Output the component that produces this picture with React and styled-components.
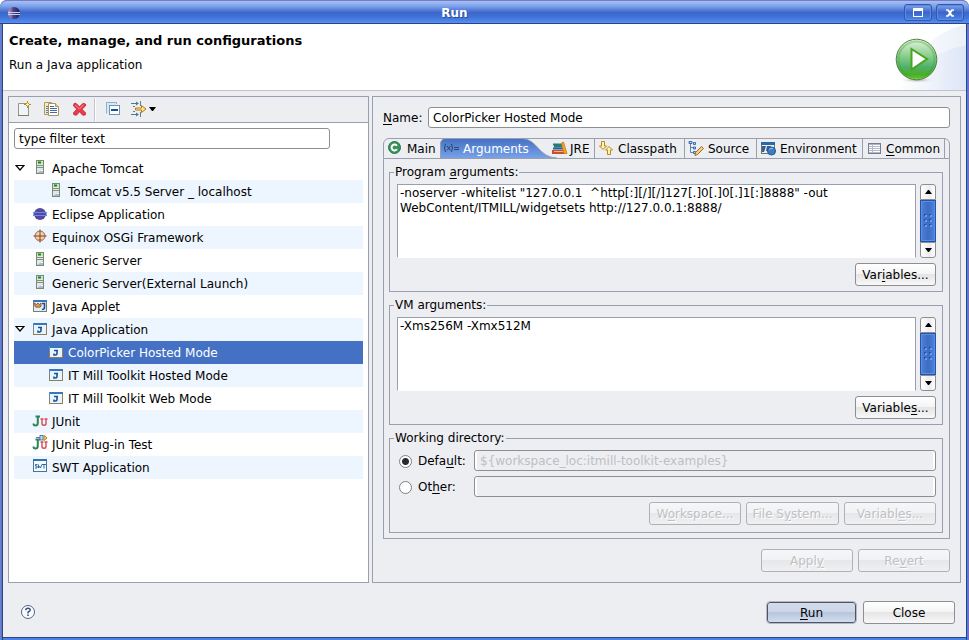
import React, { useState } from "react";
import styled, { createGlobalStyle } from "styled-components";

const line = "#9b9eae";
const face = "#edeef2";
const accent = "#4471c4";

const GlobalStyle = createGlobalStyle`
  *, *::before, *::after { box-sizing: border-box; }
  html, body { margin: 0; }
  body, button, input, textarea {
    font-family: "DejaVu Sans", Verdana, sans-serif;
    font-size: 12px;
    line-height: 15px;
    color: #000;
  }
  body { background: #fff; }
  u { text-underline-offset: 2px; }
`;

/* ---------- window frame ---------- */

const Window = styled.div`
  display: flex;
  flex-direction: column;
  min-height: 100vh;
  padding: 0 3px 3px;
  border-radius: 7px 7px 0 0;
  background: linear-gradient(90deg, #7d7ab8 0 1px, #4a7fe4 1px 2px, #33427f 2px 3px, transparent 3px calc(100% - 3px), #33427f calc(100% - 3px) calc(100% - 2px), #4a7fe4 calc(100% - 2px) calc(100% - 1px), #7470c0 calc(100% - 1px)),
    #4a82e8;
`;

const TitleBar = styled.header`
  display: flex;
  align-items: center;
  height: 24px;
  margin: 0 -3px;
  padding: 1px 5px 0 7px;
  border-top: 1px solid #7b7abc;
  border-bottom: 1px solid #33427f;
  border-radius: 7px 7px 0 0;
  background: linear-gradient(#a5c1f7, #7a9fe8 25%, #3c66cb 52%, #4173d8 75%, #5490f5);
`;

const WindowTitle = styled.h1`
  flex: 1;
  margin: 0 12px 0 0;
  text-align: center;
  font-size: 12px;
  line-height: 20px;
  color: #fff;
  text-shadow: 1px 1px #2c4c96;
`;

const FrameButton = styled.button`
  display: flex;
  align-items: center;
  justify-content: center;
  width: 28px;
  height: 17px;
  margin-left: 4px;
  padding: 0;
  border: 1px solid #3159ab;
  border-radius: 3px;
  box-shadow: inset 0 0 0 1px #5f8ce2;
  background: linear-gradient(#7fa4ec, #3b65c9 50%, #4c84e8);
`;

const Client = styled.div`
  flex: 1;
  display: flex;
  flex-direction: column;
  background: ${face};
  border-bottom: 1px solid #33427f;
  margin-bottom: -1px;
`;

/* ---------- banner ---------- */

const Banner = styled.section`
  position: relative;
  height: 67px;
  padding: 9px 6px;
  background: #fff;
  border-bottom: 1px solid #c2c3c6;
`;

const BannerTitle = styled.h2`
  margin: 0 0 10px;
  font-size: 13px;
  line-height: 15px;
`;

const BannerText = styled.p`
  margin: 0;
`;

const BannerArt = styled.svg`
  position: absolute;
  top: 0;
  right: 0;
`;

/* ---------- panels ---------- */

const Panels = styled.main`
  flex: 1;
  display: grid;
  grid-template-columns: 361fr 589fr;
  gap: 3px;
  padding: 5px 5px 0;
`;

const Panel = styled.section`
  min-width: 0;
  border: 1px solid ${line};
  background: ${(p) => (p.$white ? "#fff" : face)};
`;

const Toolbar = styled.div`
  display: flex;
  align-items: center;
  height: 26px;
  padding: 0 0 1px 1px;
  background: ${face};
  border-bottom: 1px solid ${line};
`;

const ToolButton = styled.button`
  display: flex;
  align-items: center;
  justify-content: center;
  gap: 2px;
  width: ${(p) => (p.$menu ? 33 : 28)}px;
  height: 22px;
  padding: 0;
  border: 0;
  background: none;
`;

const ToolDivider = styled.span`
  width: 2px;
  height: 23px;
  margin-right: 3px;
  background: linear-gradient(90deg, #c3c5ca 50%, #fff 50%);
`;

const Field = styled.input`
  width: 100%;
  min-width: 0;
  height: 21px;
  padding: 1px 4px 0;
  border: 1px solid #8c8e91;
  border-radius: 3px;
  background: #fff;
  &:disabled {
    padding-left: 5px;
    background: ${face};
    color: #bdbfc2;
    box-shadow: inset 2px 0 #fff, inset -2px 0 #fff;
  }
`;

const FilterBar = styled.div`
  width: 90%;
  padding: 5px 2px 0 5px;
`;

/* ---------- tree ---------- */

const Tree = styled.ul`
  margin: 8px 5px 0;
  padding: 0;
  list-style: none;
`;

const TreeRow = styled.li`
  display: flex;
  align-items: center;
  height: 23px;
  padding-left: ${(p) => p.$level * 16}px;
  white-space: pre;
  background: ${(p) => (p.$selected ? accent : p.$odd ? "#edf5ff" : "#fff")};
  color: ${(p) => (p.$selected ? "#fff" : "#000")};
`;

const TreeToggle = styled.span`
  display: flex;
  width: 18px;
  padding: 0 0 1px 1px;
`;

const TreeIcon = styled.span`
  display: flex;
  width: 20px;
  padding-bottom: 3px;
`;

const TreeLabel = styled.span`
  padding-top: 2px;
`;

/* ---------- right side ---------- */

const Details = styled(Panel)`
  padding: 10px;
`;

const NameRow = styled.div`
  display: grid;
  grid-template-columns: 45px 1fr;
  align-items: center;
  margin-bottom: 10px;
`;

const NameLabel = styled.label`
  padding-top: 2px;
`;

const Tabs = styled.div`
  display: flex;
  height: 21px;
  border: 1px solid ${line};
  border-radius: 6px 6px 0 0;
`;

const Tab = styled.button`
  position: relative;
  display: flex;
  align-items: center;
  gap: 2px;
  height: 19px;
  padding: 0 4px 0 3px;
  border: 0;
  border-right: ${(p) => (p.$divided ? `1px solid ${line}` : 0)};
  background: none;
  white-space: nowrap;
  width: ${(p) => p.$width}px;
  z-index: ${(p) => (p.$active ? 1 : 0)};
  color: ${(p) => (p.$active ? "#fff" : "#000")};
  font-size: 12px;
`;

const TabShape = styled.svg`
  position: absolute;
  left: 0;
  top: -1px;
  z-index: -1;
`;

const TabIcon = styled.span`
  display: flex;
  flex: none;
  width: ${(p) => p.$slot || 18}px;
  padding-bottom: 1px;
`;

const TabLabel = styled.span`
  padding-top: 2px;
`;

const TabPage = styled.div`
  display: flex;
  flex-direction: column;
  gap: 6px;
  padding: 6px 6px 5px 5px;
  border: 1px solid ${line};
  border-top: 0;
`;

const Group = styled.fieldset`
  min-width: 0;
  margin: 0;
  padding: 4px 6px ${(p) => p.$bottom || 5}px 4px;
  border: 1px solid ${line};
`;

const Legend = styled.legend`
  height: 15px;
  padding: 0 1px;
`;

const GroupBody = styled.div`
  display: flex;
  flex-direction: column;
  gap: 5px;
  padding-left: 3px;
`;

const EditorRow = styled.div`
  display: flex;
  gap: 4px;
`;

const Editor = styled.textarea`
  flex: 1;
  display: block;
  min-width: 0;
  height: 74px;
  padding: 1px 2px 0;
  border: 1px solid ${line};
  border-bottom-color: #fff;
  background: #fff;
  overflow: hidden;
  resize: none;
`;

const ScrollBar = styled.div`
  display: flex;
  flex-direction: column;
  width: 16px;
  height: 74px;
`;

const ScrollButton = styled.button`
  display: flex;
  align-items: center;
  justify-content: center;
  height: 16px;
  padding: 0;
  border: 1px solid #8c8e91;
  border-radius: ${(p) => (p.$end ? "0 0 3px 3px" : "3px 3px 0 0")};
  background: linear-gradient(90deg, #fff, #ececee 60%, #fff);
`;

const Thumb = styled.div`
  flex: 1;
  display: flex;
  align-items: center;
  justify-content: center;
  border: 1px solid #2a52a0;
  box-shadow: inset 0 0 0 1px #5590f0;
  background: linear-gradient(90deg, #4f80d6, #3c6cc4 50%, #4e82dc);
`;

const ButtonRow = styled.div`
  display: flex;
  justify-content: flex-end;
  gap: 5px;
`;

const Button = styled.button`
  width: ${(p) => p.$width || 92}px;
  height: 23px;
  padding: 1px 0 0;
  border: 1px solid #8c8e91;
  border-radius: 3px;
  background: linear-gradient(#fff, #f4f4f5 48%, #e5e5e6 50%, #f8f8f8);
  &:disabled {
    color: #bfc1c4;
    border-color: #b0b1b4;
    text-shadow: 1px 1px #fff;
    background: linear-gradient(#f6f6f8, #f1f2f4 48%, #e6e7e9 50%, #f0f0f2);
  }
`;

const DefaultButton = styled(Button)`
  border: 1px solid #505564;
  outline: 1px solid #b4b8c2;
  height: 21px;
  background: linear-gradient(#d3dcec, #cbd6e9 48%, #b9c6da 50%, #d0dcf0);
`;

const DirectoryRow = styled.div`
  display: grid;
  grid-template-columns: 77px 1fr;
  align-items: center;
`;

const RadioLabel = styled.label`
  display: flex;
  align-items: center;
  gap: 6px;
  padding: 1px 0 0 2px;
`;

const Radio = styled.input`
  appearance: none;
  width: 13px;
  height: 13px;
  margin: 0;
  border: 1px solid #7e8083;
  border-radius: 50%;
  background: #fff;
  &:checked {
    background: radial-gradient(circle, #2a2a2c 3px, #fff 4px);
  }
`;

const Actions = styled(ButtonRow)`
  padding-top: 10px;
`;

const Footer = styled.footer`
  display: flex;
  align-items: center;
  justify-content: space-between;
  padding: 18px 11px 13px 17px;
`;

const FooterButtons = styled(ButtonRow)`
  align-items: center;
  gap: 7px;
`;

const HelpButton = styled.button`
  display: flex;
  padding: 0 0 1px;
  border: 0;
  background: none;
`;

/* ---------- icons ---------- */

const Svg = ({ w = 16, h = 16, children }) => (
  <svg width={w} height={h} viewBox={`0 0 ${w} ${h}`} aria-hidden="true">
    {children}
  </svg>
);

const Globe = () => (
  <Svg w={14} h={14}>
    <defs>
      <linearGradient id="globe">
        <stop offset="0" stopColor="#d9a0b8" />
        <stop offset=".45" stopColor="#4a4288" />
        <stop offset="1" stopColor="#221c58" />
      </linearGradient>
    </defs>
    <circle cx="7" cy="7" r="6" fill="url(#globe)" />
    <path d="M1 6.500h12M1 8.500h12" stroke="#c5cff5" />
  </Svg>
);

const NewIcon = () => (
  <Svg>
    <path d="M2.500 2.500h9l1 1v11h-10z" fill="#eef6fd" stroke="#9a957c" />
    <path d="M2 14.500h11" stroke="#8a7a4a" />
    <path d="M11.500 0v7M8 3.500h7" stroke="#b08a18" />
    <path d="M11.500 1.500l2 2-2 2-2-2z" fill="#fff3a0" stroke="#b08a18" />
  </Svg>
);

const CopyIcon = () => (
  <Svg>
    <path d="M.5 1.500h7l2 2v10h-9z" fill="#f4ecc8" stroke="#b59a56" />
    <path d="M2 5.500h3M2 7.500h3M2 9.500h3M2 11.500h3" stroke="#5a78a8" />
    <path d="M4.500 2.500h7l3 3v9h-10z" fill="#fff" stroke="#a8945c" />
    <path d="M11.500 2.500v3h3" fill="#f0d890" stroke="#a8945c" />
    <path d="M6 5.500h4M6 7.500h7M6 9.500h7M6 11.500h7" stroke="#4568a8" />
  </Svg>
);

const DeleteIcon = () => (
  <Svg>
    <path d="M2 2.500l2-.2 3.500 3.500 3.500-3.500 2.500.7.200 1.700-3.700 3.500 3.700 3.800-.5 2-2.500.2-3.200-3.500-3 3.500-2.500-.4-.7-1.800 3.500-3.800L1.500 5z" fill="#e63c4b" stroke="#c81e34" strokeWidth=".8" />
    <path d="M3 4l4.500 4 4-4.500" stroke="#f58a90" fill="none" />
  </Svg>
);

const CollapseIcon = () => (
  <Svg>
    <path d="M1.500 12.500v-11h10V3" fill="none" stroke="#8db0cc" />
    <rect x="2" y="2" width="9" height="10" fill="#d7e9f6" />
    <rect x="4.500" y="4.500" width="10" height="9" fill="#fff" stroke="#6f93b4" />
    <path d="M6 9h7" stroke="#12559a" strokeWidth="2" />
  </Svg>
);

const FilterIcon = () => (
  <Svg>
    <path d="M0 2.500h7M0 13.500h7" stroke="#4f7899" />
    <path d="M5 .5l3 2-3 2zM5 11.500l3 2-3 2z" fill="#4f7899" />
    <path d="M9.500 0v5M9.500 11v5M2 5.500h2M2 10.500h2" stroke="#627f96" />
    <path d="M4.500 7h6V4.500L15 8l-4.500 3.500V9h-6z" fill="#ffe592" stroke="#b87a10" />
  </Svg>
);

const Caret = ({ up }) => (
  <Svg w={7} h={4}>
    <path d={up ? "M0 4h7L4 0H3z" : "M0 0h7L4 4H3z"} fill="#000" />
  </Svg>
);

const Expander = () => (
  <Svg w={10} h={6}>
    <path d="M1 .5h8L5 5z" fill="#fff" stroke="#000" strokeWidth="1.200" />
  </Svg>
);

const ServerIcon = () => (
  <Svg>
    <rect x="4.500" y="1.500" width="7" height="13" fill="#dfe9f6" stroke="#7f8a68" />
    <rect x="5" y="2" width="6" height="3" fill="#c8e2c4" />
    <path d="M6 3.500h3" stroke="#138a1c" strokeWidth="2" />
    <path d="M4 6.500h8M5 8.500h6" stroke="#84906f" />
    <path d="M5 14l6-4v4z" fill="#a9b9d8" />
    <path d="M9 11.500h2" stroke="#fff" />
  </Svg>
);

const EclipseIcon = () => (
  <Svg>
    <circle cx="8" cy="9" r="6" fill="#56499a" />
    <path d="M1 7.500h14M1 10.500h14" stroke="#6a86f0" />
    <path d="M1 9h14" stroke="#4450b0" />
  </Svg>
);

const EquinoxIcon = () => (
  <Svg>
    <circle cx="8" cy="8" r="5" fill="#f2cfae" stroke="#a3683f" />
    <path d="M4 11a5 5 0 0 0 8 0z" fill="#d39868" />
    <path d="M8 1.500v13M1.500 8h13" stroke="#7c4526" />
  </Svg>
);

const JavaAppIcon = () => (
  <Svg>
    <rect x="1.500" y="3.500" width="13" height="11" fill="#eaf4fd" stroke="#8d815a" />
    <path d="M1 4h14" stroke="#3b75b8" strokeWidth="2" />
    <path d="M1.500 3v6" stroke="#5b8cc4" />
    <path d="M6 7.500h4M9 7v3.500q0 1.500-1.500 1.500H6v-1.500" fill="none" stroke="#17539a" strokeWidth="1.600" />
  </Svg>
);

const AppletIcon = () => (
  <Svg>
    <rect x="1.500" y="3.500" width="13" height="11" fill="#dfeefb" stroke="#7d7b69" />
    <path d="M1 4h14" stroke="#3b75b8" strokeWidth="2" />
    <path d="M2.500 6l2 1.500L6 6l1.500 1.500L9 6v3.500l-2 1-1-.8-1 .8-2-1z" fill="#d99756" stroke="#87481c" strokeWidth=".8" />
    <path d="M10 6.500h2.500v4q0 2-2.500 2" fill="none" stroke="#17539a" strokeWidth="1.600" />
  </Svg>
);

const JUnitIcon = ({ plugin }) => (
  <Svg>
    <path d="M3.500 4.500h4.500M5.800 5v6q0 2.500-2.500 2.500Q1.500 13.500 1.500 11.500" fill="none" stroke="#2b855a" strokeWidth="2" />
    <path d="M8.500 7h3M12.500 7h3M10 7.500v4q0 1.800 2 1.800t2-1.800v-4" fill="none" stroke="#d84a55" strokeWidth="1.400" />
    {plugin && (
      <>
        <path d="M4 2.500h4M6 4.500h2" stroke="#5a80a8" />
        <rect x="8" y=".5" width="3" height="4.500" fill="#bfe0f6" stroke="#33699c" strokeWidth=".8" />
        <path d="M12 .5l3 2.500-3 2.500z" fill="#ffe27a" stroke="#b57a10" />
      </>
    )}
  </Svg>
);

const SwtIcon = () => (
  <Svg>
    <rect x="1.500" y="1.500" width="13" height="12" fill="#f3faff" stroke="#46759c" />
    <path d="M1 2h14" stroke="#3472b4" strokeWidth="2" />
    <path d="M5.500 6.500h-2v1.500h1.500v2h-2M6.500 6.500v3.500l1-1.500 1 1.500 1.300-3.500M10 6.500h4M12 6.500v4" fill="none" stroke="#23588c" strokeWidth=".9" />
  </Svg>
);

const MainIcon = () => (
  <Svg>
    <circle cx="7.500" cy="7.500" r="6" fill="#39935a" stroke="#27774a" />
    <path d="M10 5.700A3 3 0 1 0 10 9.300" fill="none" stroke="#fff" strokeWidth="1.900" />
  </Svg>
);

const ArgsIcon = () => (
  <Svg>
    <path d="M2.500 4Q.5 8 2.500 12M8.500 4q2 4 0 8M4 6l3.500 4.500M7.500 6L4 10.500M11 7.500h5M11 9.500h5" fill="none" stroke="#27466c" />
  </Svg>
);

const JreIcon = () => (
  <Svg>
    <path d="M1 4.500h9M2 6.500h8" stroke="#207f78" strokeWidth="2" />
    <path d="M1 8.500h10" stroke="#31589a" strokeWidth="2" />
    <path d="M0 12h12" stroke="#c4502c" strokeWidth="4" />
    <path d="M2 11.500h9" stroke="#f1b392" />
    <path d="M9.500 3l2-1L15 13.500h-3z" fill="#f5a623" stroke="#cf7610" strokeWidth=".8" />
  </Svg>
);

const ClasspathIcon = () => (
  <Svg>
    <path d="M3.500 1.500h3V6h2L5 9.500 1.500 6h2z" fill="#fff2b5" stroke="#bd8617" />
    <path d="M9.500 14.500h3V10h2L11 6.500 7.500 10h2z" fill="#fff2b5" stroke="#bd8617" />
  </Svg>
);

const SourceIcon = () => (
  <Svg>
    <path d="M2.500 3v9.500H6M2.500 7.500H6" fill="none" stroke="#5c84ba" />
    <path d="M1 1.500h3v2H1zM5.500 2.500h2v2h-2zM5.500 7h2v2h-2zM5.500 11.500h2v2h-2z" fill="#b8d4f0" stroke="#396daf" />
    <path d="M13.500 6.500l2 2-6 6-2.500 1 .5-3z" fill="#f3cd84" stroke="#a06c20" />
  </Svg>
);

const EnvironmentIcon = () => (
  <Svg>
    <rect x="1.500" y="2.500" width="13" height="11" fill="#e5f0fb" stroke="#76765f" />
    <path d="M1 3.500h14" stroke="#2d65a8" strokeWidth="3" />
    <path d="M2 6h4L4 12H2zM7 6h4l-2 5H6z" fill="#365c92" />
    <circle cx="11.500" cy="11" r="4" fill="#3e7dc0" stroke="#235791" />
    <path d="M9 9.500q2-2 4-1" stroke="#9bc6ee" fill="none" />
  </Svg>
);

const CommonIcon = () => (
  <Svg>
    <rect x="2.500" y="3.500" width="12" height="10" fill="#fff" stroke="#777d8e" />
    <path d="M3 4.500h11" stroke="#a9b5cb" />
    <path d="M3 6.500h11M3 8.500h11M3 10.500h11M3 12.500h11M6.500 4v9" stroke="#b3b9c8" />
  </Svg>
);

const HelpIcon = () => (
  <Svg>
    <circle cx="8" cy="8" r="6.500" fill="#fbfcfe" stroke="#4e6588" />
    <path d="M5.800 6.300q0-2 2.200-2t2.200 1.800Q10.200 7.300 8 8.300v1.200" fill="none" stroke="#38507a" strokeWidth="1.500" />
    <path d="M7.200 10.500h1.600v1.600H7.200z" fill="#38507a" />
  </Svg>
);

const RunBadge = () => (
  <BannerArt width="76" height="66" viewBox="0 0 76 66" aria-hidden="true">
    <defs>
      <linearGradient id="sweep">
        <stop offset="0" stopColor="#fff" />
        <stop offset="1" stopColor="#dde5f6" />
      </linearGradient>
      <linearGradient id="disc" x2="0" y2="1">
        <stop offset="0" stopColor="#e4f3df" />
        <stop offset=".4" stopColor="#8ccf8f" />
        <stop offset=".7" stopColor="#4fae6a" />
        <stop offset=".88" stopColor="#48b020" />
        <stop offset="1" stopColor="#8fd860" />
      </linearGradient>
      <radialGradient id="shade">
        <stop offset="0" stopColor="#777" stopOpacity=".7" />
        <stop offset="1" stopColor="#fff" stopOpacity="0" />
      </radialGradient>
    </defs>
    <path d="M8 66Q28 12 76 0V66z" fill="url(#sweep)" opacity=".6" />
    <path d="M8 66Q38 28 76 21V66z" fill="url(#sweep)" />
    <ellipse cx="27" cy="56" rx="19" ry="3" fill="url(#shade)" />
    <circle cx="26.500" cy="35.500" r="20.300" fill="url(#disc)" stroke="#55803e" />
    <circle cx="26.500" cy="35.500" r="18" fill="none" stroke="#35a52c" strokeWidth="2" opacity=".35" />
    <path d="M21.500 25v20.500l15.500-10.500z" fill="#fff" stroke="#48a51c" strokeWidth="2" />
  </BannerArt>
);

/* ---------- data ---------- */

const treeItems = [
  { label: "Apache Tomcat", icon: ServerIcon, open: true },
  { label: "Tomcat v5.5 Server _ localhost", icon: ServerIcon, level: 1 },
  { label: "Eclipse Application", icon: EclipseIcon },
  { label: "Equinox OSGi Framework", icon: EquinoxIcon },
  { label: "Generic Server", icon: ServerIcon },
  { label: "Generic Server(External Launch)", icon: ServerIcon },
  { label: "Java Applet", icon: AppletIcon },
  { label: "Java Application", icon: JavaAppIcon, open: true },
  { label: "ColorPicker Hosted Mode", icon: JavaAppIcon, level: 1 },
  { label: "IT Mill Toolkit Hosted Mode", icon: JavaAppIcon, level: 1 },
  { label: "IT Mill Toolkit Web Mode", icon: JavaAppIcon, level: 1 },
  { label: "JUnit", icon: JUnitIcon },
  { label: "JUnit Plug-in Test", icon: () => <JUnitIcon plugin /> },
  { label: "SWT Application", icon: SwtIcon },
];

const tabs = [
  { label: "Main", icon: MainIcon, width: 56 },
  { label: "Arguments", icon: ArgsIcon, width: 109, active: true },
  { label: "JRE", icon: JreIcon, width: 46, divided: true, slot: 16 },
  { label: "Classpath", icon: ClasspathIcon, width: 90, divided: true },
  { label: "Source", icon: SourceIcon, width: 72, divided: true },
  { label: "Environment", icon: EnvironmentIcon, width: 106, divided: true },
  { label: <><u>C</u>ommon</>, icon: CommonIcon, width: 82, divided: true },
];

/* ---------- composed parts ---------- */

function ArgumentsGroup({ legend, name, value, button }) {
  return (
    <Group>
      <Legend>{legend}</Legend>
      <GroupBody>
        <EditorRow>
          <Editor aria-label={name} defaultValue={value} spellCheck={false} />
          <ScrollBar>
            <ScrollButton aria-label="Scroll up"><Caret up /></ScrollButton>
            <Thumb>
              <Svg w={8} h={14}>
                {[0, 5, 10].map((y) => (
                  <g key={y}>
                    <path d={`M0 ${y}h2v2H0zM5 ${y}h2v2H5z`} fill="#27509f" />
                    <path d={`M1 ${y + 1}h2v2H1zM6 ${y + 1}h2v2H6z`} fill="#6c9be8" />
                  </g>
                ))}
              </Svg>
            </Thumb>
            <ScrollButton aria-label="Scroll down" $end><Caret /></ScrollButton>
          </ScrollBar>
        </EditorRow>
        <ButtonRow>
          <Button $width={81}>{button}</Button>
        </ButtonRow>
      </GroupBody>
    </Group>
  );
}

export default function App() {
  const [directory, setDirectory] = useState("default");
  return (
    <>
      <GlobalStyle />
      <Window>
        <TitleBar>
          <Globe />
          <WindowTitle>Run</WindowTitle>
          <FrameButton aria-label="Maximize">
            <Svg w={12} h={9}>
              <rect x="1.500" y="1.500" width="9" height="7" fill="none" stroke="#fff" />
              <path d="M1 1.500h10" stroke="#fff" strokeWidth="3" />
            </Svg>
          </FrameButton>
          <FrameButton aria-label="Close window">
            <Svg w={10} h={8}>
              <path d="M1 1h2l2 2 2-2h2M1 7h2l2-2 2 2h2M3 1.500l4 5M7 1.500l-4 5" fill="none" stroke="#fff" strokeWidth="1.600" />
            </Svg>
          </FrameButton>
        </TitleBar>
        <Client>
          <Banner>
            <BannerTitle>Create, manage, and run configurations</BannerTitle>
            <BannerText>Run a Java application</BannerText>
            <RunBadge />
          </Banner>
          <Panels>
            <Panel $white>
              <Toolbar>
                <ToolButton aria-label="New configuration"><NewIcon /></ToolButton>
                <ToolButton aria-label="Duplicate"><CopyIcon /></ToolButton>
                <ToolButton aria-label="Delete"><DeleteIcon /></ToolButton>
                <ToolDivider />
                <ToolButton aria-label="Collapse all"><CollapseIcon /></ToolButton>
                <ToolButton aria-label="Filter" $menu><FilterIcon /><Caret /></ToolButton>
              </Toolbar>
              <FilterBar>
                <Field aria-label="Filter" defaultValue="type filter text" />
              </FilterBar>
              <Tree role="tree">
                {treeItems.map(({ label, icon: Icon, level = 0, open }, i) => (
                  <TreeRow key={label} role="treeitem" $level={level} $odd={i % 2 === 1} $selected={i === 8} aria-selected={i === 8}>
                    <TreeToggle>{open && <Expander />}</TreeToggle>
                    <TreeIcon><Icon /></TreeIcon>
                    <TreeLabel>{label}</TreeLabel>
                  </TreeRow>
                ))}
              </Tree>
            </Panel>
            <Details>
              <NameRow>
                <NameLabel htmlFor="config-name"><u>N</u>ame:</NameLabel>
                <Field id="config-name" defaultValue="ColorPicker Hosted Mode" />
              </NameRow>
              <Tabs role="tablist">
                {tabs.map(({ label, icon: Icon, width, active, divided, slot }, i) => (
                  <Tab key={i} role="tab" aria-selected={!!active} $width={width} $active={active} $divided={divided}>
                    {active && (
                      <TabShape width="118" height="21" viewBox="0 0 118 21" aria-hidden="true">
                        <defs>
                          <linearGradient id="tab" x2="0" y2="1">
                            <stop offset="0" stopColor="#4270c4" />
                            <stop offset="1" stopColor="#78a1e8" />
                          </linearGradient>
                        </defs>
                        <path d="M0 20V6Q1 1 5 .5H82C98 1 98 19.500 117 20z" fill="url(#tab)" />
                        <path d="M.5 20V6Q1 1 5 .5H82C98 1 98 19.500 117 20" fill="none" stroke={line} />
                      </TabShape>
                    )}
                    <TabIcon $slot={slot}><Icon /></TabIcon>
                    <TabLabel>{label}</TabLabel>
                  </Tab>
                ))}
              </Tabs>
              <TabPage>
                <ArgumentsGroup
                  legend={<>Program <u>a</u>rguments:</>}
                  name="Program arguments"
                  value={'-noserver -whitelist "127.0.0.1  ^http[:][/][/]127[.]0[.]0[.]1[:]8888" -out\nWebContent/ITMILL/widgetsets http://127.0.0.1:8888/'}
                  button={<>Var<u>i</u>ables...</>}
                />
                <ArgumentsGroup
                  legend="VM arguments:"
                  name="VM arguments"
                  value="-Xms256M -Xmx512M"
                  button={<>Variable<u>s</u>...</>}
                />
                <Group $bottom={7}>
                  <Legend>Working directory:</Legend>
                  <GroupBody>
                    <DirectoryRow>
                      <RadioLabel>
                        <Radio type="radio" name="directory" checked={directory === "default"} onChange={() => setDirectory("default")} />
                        <span>Defa<u>u</u>lt:</span>
                      </RadioLabel>
                      <Field aria-label="Default directory" disabled defaultValue="${workspace_loc:itmill-toolkit-examples}" />
                    </DirectoryRow>
                    <DirectoryRow>
                      <RadioLabel>
                        <Radio type="radio" name="directory" checked={directory === "other"} onChange={() => setDirectory("other")} />
                        <span>Ot<u>h</u>er:</span>
                      </RadioLabel>
                      <Field aria-label="Other directory" disabled />
                    </DirectoryRow>
                    <ButtonRow>
                      <Button disabled>W<u>o</u>rkspace...</Button>
                      <Button disabled $width={93}>File S<u>y</u>stem...</Button>
                      <Button disabled>Variabl<u>e</u>s...</Button>
                    </ButtonRow>
                  </GroupBody>
                </Group>
              </TabPage>
              <Actions>
                <Button disabled>Appl<u>y</u></Button>
                <Button disabled>Re<u>v</u>ert</Button>
              </Actions>
            </Details>
          </Panels>
          <Footer>
            <HelpButton aria-label="Help"><HelpIcon /></HelpButton>
            <FooterButtons>
              <DefaultButton $width={89}><u>R</u>un</DefaultButton>
              <Button>Close</Button>
            </FooterButtons>
          </Footer>
        </Client>
      </Window>
    </>
  );
}
